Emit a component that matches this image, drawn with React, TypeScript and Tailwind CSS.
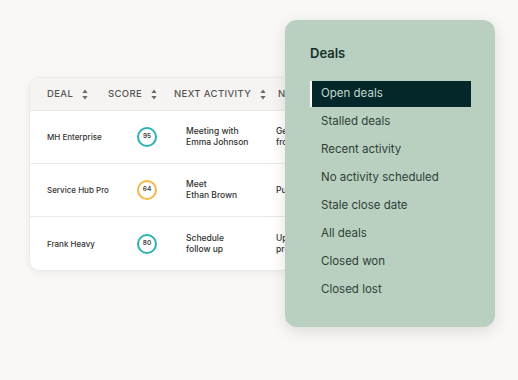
import React from 'react';

const font = { fontFamily: 'Inter, "Noto Sans", sans-serif' };

const SortIcon = () => (
  <svg width="6" height="11" viewBox="0 0 6 11" className="ml-[9px] shrink-0">
    <path d="M3 0.5 L5.6 4 H0.4 Z" fill="#6b6b6b" />
    <path d="M3 10.5 L5.6 7 H0.4 Z" fill="#6b6b6b" />
  </svg>
);

const rows = [
  { deal: 'MH Enterprise', score: 95, color: 'border-[#2bb3b1]', act: ['Meeting with', 'Emma Johnson'], next: ['Get', 'from'] },
  { deal: 'Service Hub Pro', score: 64, color: 'border-[#f4b740]', act: ['Meet', 'Ethan Brown'], next: ['Pull'] },
  { deal: 'Frank Heavy', score: 80, color: 'border-[#2bb3b1]', act: ['Schedule', 'follow up'], next: ['Upd', 'prep'] },
];

const items = [
  'Stalled deals',
  'Recent activity',
  'No activity scheduled',
  'Stale close date',
  'All deals',
  'Closed won',
  'Closed lost',
];

export default function App() {
  return (
    <div className="relative w-[518px] h-[380px] overflow-hidden bg-[#f9f8f6]" style={font}>
      {/* table card, right part sits under the dropdown */}
      <div className="ml-[29px] mt-[77px] w-[262px] rounded-[10px] bg-white shadow-[0_2px_8px_rgba(0,0,0,0.06)] border border-[#ebeae7] overflow-hidden">
        <div className="flex items-center h-[33px] bg-[#f5f4f2] border-b border-[#ebeae7] text-[9.5px] tracking-[0.04em] text-[#555] font-medium whitespace-nowrap">
          <div className="w-[78px] shrink-0 pl-[17px] flex items-center">DEAL<SortIcon /></div>
          <div className="w-[66px] shrink-0 flex items-center">SCORE<SortIcon /></div>
          <div className="w-[104px] shrink-0 flex items-center">NEXT ACTIVITY<SortIcon /></div>
          <div className="w-[8px] overflow-hidden">N</div>
        </div>
        {rows.map((r, i) => (
          <div
            key={r.deal}
            className={`flex items-center h-[53px] text-[8px] text-[#333] ${i < rows.length - 1 ? 'border-b border-[#ebeae7]' : ''}`}
          >
            <div className="w-[107px] shrink-0 pl-[17px] font-medium">{r.deal}</div>
            <div className="w-[49px] shrink-0">
              <div className={`w-[20px] h-[20px] rounded-full border-2 ${r.color} flex items-center justify-center text-[6.5px] font-semibold text-[#444]`}>
                {r.score}
              </div>
            </div>
            <div className="w-[90px] shrink-0 font-medium leading-[11px] text-[8.5px]">
              {r.act.map((l) => (
                <div key={l}>{l}</div>
              ))}
            </div>
            <div className="w-[9px] overflow-hidden font-medium leading-[11px] text-[8.5px] whitespace-nowrap">
              {r.next.map((l) => (
                <div key={l}>{l}</div>
              ))}
            </div>
          </div>
        ))}
      </div>

      {/* deals dropdown */}
      <div className="absolute left-[285px] top-[20px] w-[210px] h-[307px] rounded-[12px] bg-[#b9cfbf] shadow-[0_4px_16px_rgba(0,0,0,0.12)] pl-[25px] pr-[24px] pt-[24px]">
        <div className="text-[13px] font-semibold text-[#15302b] leading-[18px]">Deals</div>
        <div className="mt-[18px] flex flex-col">
          <div className="h-[28px] py-[1px]">
            <div className="h-[26px] flex items-center bg-[#04282a] border-l-2 border-white pl-[9px] text-[11.5px] text-[#c5d8cc]">
              Open deals
            </div>
          </div>
          {items.map((t) => (
            <div key={t} className="h-[27.9px] flex items-center pl-[11px] text-[11.5px] text-[#2f3f39]">
              {t}
            </div>
          ))}
        </div>
      </div>
    </div>
  );
}
